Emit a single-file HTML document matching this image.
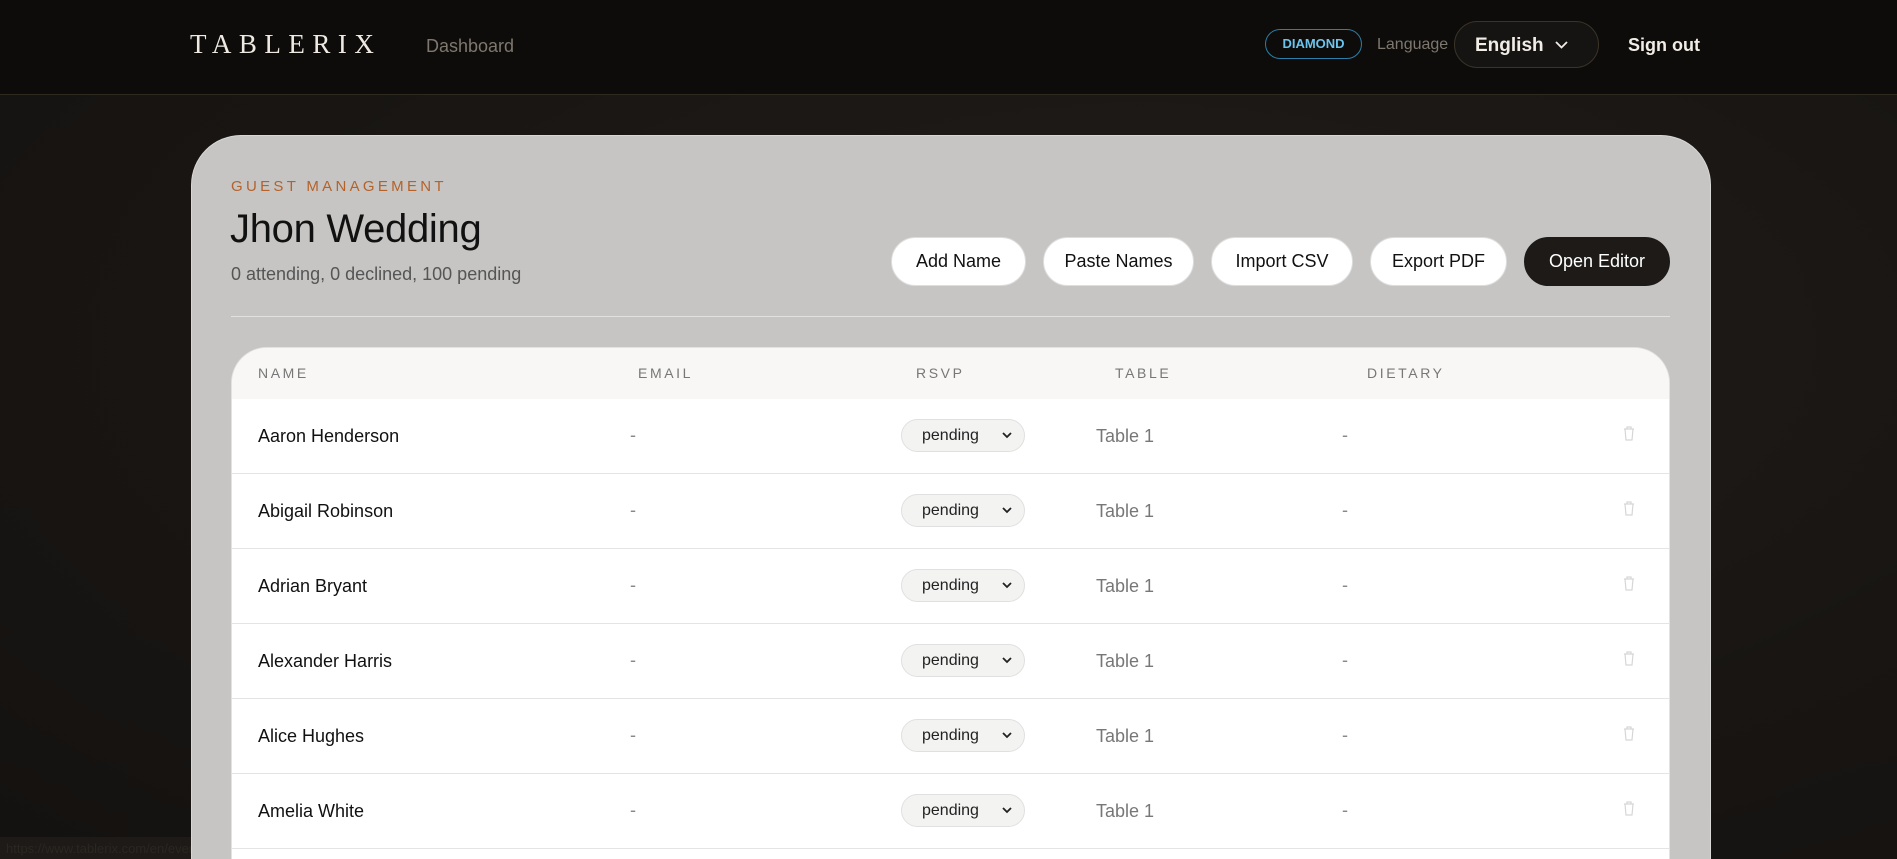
<!DOCTYPE html>
<html><head><meta charset="utf-8"><style>
*{box-sizing:border-box;margin:0;padding:0}
html{width:1897px;height:859px;overflow:hidden}
body{width:1897px;height:859px;overflow:hidden;background:radial-gradient(ellipse at 60% 40%,#221d19 0%,#181513 60%,#141210 100%);font-family:"Liberation Sans",sans-serif;position:relative}
.wrap{position:absolute;left:0;top:0;width:1897px;height:859px;overflow:hidden}
.hdr{position:absolute;left:0;top:0;width:1897px;height:95px;background:#0d0c0a;border-bottom:1px solid #2e2a1f}
.logo{position:absolute;left:190px;top:29px;font-family:"Liberation Serif",serif;font-size:27px;letter-spacing:7.5px;color:#eeeae2}
.dash{position:absolute;left:426px;top:36px;font-size:18px;color:#7d776e}
.badge{position:absolute;left:1265px;top:29px;width:97px;height:30px;border:1px solid #2b7ea6;border-radius:15px;color:#6cc4ee;font-size:13px;font-weight:bold;text-align:center;line-height:28px}
.lang{position:absolute;left:1377px;top:36px;font-size:16px;color:#7d776e}
.sel{position:absolute;left:1454px;top:21px;width:145px;height:47px;border:1px solid #3a3428;border-radius:24px;background:#151413;color:#f1ede6;font-size:19px;font-weight:bold;padding:13px 0 0 20px}
.sel svg{position:absolute;right:30px;top:19px}
.so{position:absolute;left:1628px;top:35px;color:#f1ede6;font-size:18px;font-weight:bold}
.card{position:absolute;left:191px;top:135px;width:1520px;height:724px;background:#c6c5c3;border-radius:50px 50px 0 0;border:1px solid #d8d7d5;border-bottom:none}
.gm{position:absolute;left:231px;top:178px;font-size:15px;letter-spacing:3.3px;color:#b5622a}
h1{position:absolute;left:230px;top:207px;font-size:40px;font-weight:normal;color:#111;letter-spacing:-0.3px}
.sub{position:absolute;left:231px;top:264px;font-size:18px;color:#555}
.btn{position:absolute;top:237px;height:49px;border-radius:25px;background:#fff;border:1px solid #ddd;font-size:18px;color:#111;text-align:center;line-height:47px}
.div{position:absolute;left:231px;top:316px;width:1439px;height:1px;background:#e2e1df}
.tbl{position:absolute;left:231px;top:347px;width:1439px;height:512px;background:#fff;border-radius:36px 36px 0 0;overflow:hidden;border:1px solid #e3e2e0;border-bottom:none}
.th{height:51px;background:#f8f7f5;position:relative}
.th span{position:absolute;top:17px;font-size:14px;letter-spacing:2.6px;color:#777}
.row{height:75px;border-bottom:1px solid #e4e4e4;position:relative}
.row .n{position:absolute;left:26px;top:27px;font-size:18px;color:#111}
.row .d1{position:absolute;left:398px;top:26px;color:#888;font-size:18px}
.row .d2{position:absolute;left:1110px;top:26px;color:#888;font-size:18px}
.row .t{position:absolute;left:864px;top:27px;color:#777;font-size:18px}
.row .s{position:absolute;left:669px;top:20px;width:124px;height:33px;border:1px solid #e0e0e0;border-radius:17px;background:#f3f3f2;font-size:16px;color:#222;padding:7px 0 0 20px}
.row .s svg{position:absolute;right:12px;top:12px}
.row .tr{position:absolute;left:1390px;top:26px}
.status{position:absolute;left:0;top:837px;width:191px;height:22px;background:#1d1a17;color:#2a2723;font-size:13px;padding:4px 6px;white-space:nowrap;overflow:hidden}
</style></head><body><div class="wrap">
<div class="hdr">
<div class="logo">TABLERIX</div>
<div class="dash">Dashboard</div>
<div class="badge">DIAMOND</div>
<div class="lang">Language</div>
<div class="sel">English<svg width="13" height="8" viewBox="0 0 13 8"><path d="M1 1l5.5 5.5L12 1" fill="none" stroke="#f1ede6" stroke-width="1.8"/></svg></div>
<div class="so">Sign out</div>
</div>
<div class="card"></div>
<div class="gm">GUEST MANAGEMENT</div>
<h1>Jhon Wedding</h1>
<div class="sub">0 attending, 0 declined, 100 pending</div>
<div class="btn" style="left:891px;width:135px">Add Name</div>
<div class="btn" style="left:1043px;width:151px">Paste Names</div>
<div class="btn" style="left:1211px;width:142px">Import CSV</div>
<div class="btn" style="left:1370px;width:137px">Export PDF</div>
<div class="btn" style="left:1524px;width:146px;background:#1d1a18;color:#fff;border-color:#1d1a18">Open Editor</div>
<div class="div"></div>
<div class="tbl">
<div class="th"><span style="left:26px">NAME</span><span style="left:406px">EMAIL</span><span style="left:684px">RSVP</span><span style="left:883px">TABLE</span><span style="left:1135px">DIETARY</span></div>
<div class="row"><div class="n">Aaron Henderson</div><div class="d1">-</div><div class="s">pending<svg width="10" height="7"><path d="M1 1l4 4 4-4" fill="none" stroke="#222" stroke-width="1.8"/></svg></div><div class="t">Table 1</div><div class="d2">-</div><svg class="tr" width="14" height="16"><path d="M2 4h10M5 4V2h4v2M3 4l1 11h6l1-11" fill="none" stroke="#d6d6d6" stroke-width="1.2"/></svg></div>
<div class="row"><div class="n">Abigail Robinson</div><div class="d1">-</div><div class="s">pending<svg width="10" height="7"><path d="M1 1l4 4 4-4" fill="none" stroke="#222" stroke-width="1.8"/></svg></div><div class="t">Table 1</div><div class="d2">-</div><svg class="tr" width="14" height="16"><path d="M2 4h10M5 4V2h4v2M3 4l1 11h6l1-11" fill="none" stroke="#d6d6d6" stroke-width="1.2"/></svg></div>
<div class="row"><div class="n">Adrian Bryant</div><div class="d1">-</div><div class="s">pending<svg width="10" height="7"><path d="M1 1l4 4 4-4" fill="none" stroke="#222" stroke-width="1.8"/></svg></div><div class="t">Table 1</div><div class="d2">-</div><svg class="tr" width="14" height="16"><path d="M2 4h10M5 4V2h4v2M3 4l1 11h6l1-11" fill="none" stroke="#d6d6d6" stroke-width="1.2"/></svg></div>
<div class="row"><div class="n">Alexander Harris</div><div class="d1">-</div><div class="s">pending<svg width="10" height="7"><path d="M1 1l4 4 4-4" fill="none" stroke="#222" stroke-width="1.8"/></svg></div><div class="t">Table 1</div><div class="d2">-</div><svg class="tr" width="14" height="16"><path d="M2 4h10M5 4V2h4v2M3 4l1 11h6l1-11" fill="none" stroke="#d6d6d6" stroke-width="1.2"/></svg></div>
<div class="row"><div class="n">Alice Hughes</div><div class="d1">-</div><div class="s">pending<svg width="10" height="7"><path d="M1 1l4 4 4-4" fill="none" stroke="#222" stroke-width="1.8"/></svg></div><div class="t">Table 1</div><div class="d2">-</div><svg class="tr" width="14" height="16"><path d="M2 4h10M5 4V2h4v2M3 4l1 11h6l1-11" fill="none" stroke="#d6d6d6" stroke-width="1.2"/></svg></div>
<div class="row"><div class="n">Amelia White</div><div class="d1">-</div><div class="s">pending<svg width="10" height="7"><path d="M1 1l4 4 4-4" fill="none" stroke="#222" stroke-width="1.8"/></svg></div><div class="t">Table 1</div><div class="d2">-</div><svg class="tr" width="14" height="16"><path d="M2 4h10M5 4V2h4v2M3 4l1 11h6l1-11" fill="none" stroke="#d6d6d6" stroke-width="1.2"/></svg></div>
</div>
<div class="status">https://www.tablerix.com/en/events/cd14</div>
</div></body></html>
